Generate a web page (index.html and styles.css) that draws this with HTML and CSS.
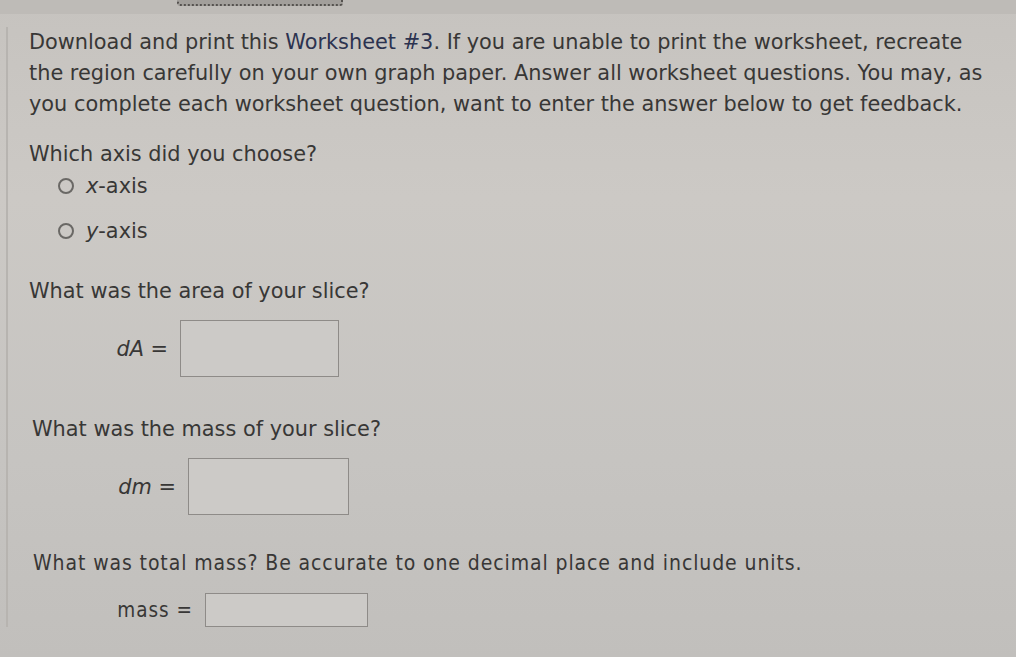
FILE: index.html
```html
<!DOCTYPE html>
<html>
<head>
<meta charset="utf-8">
<link rel="stylesheet" href="styles.css">
</head>
<body>
<div class="topbar"><div class="dotted"></div></div>
<div class="page">
  <p class="intro">Download and print this <span class="link">Worksheet #3</span>. If you are unable to print the worksheet, recreate the region carefully on your own graph paper. Answer all worksheet questions. You may, as you complete each worksheet question, want to enter the answer below to get feedback.</p>

  <p class="q q-axis">Which axis did you choose?</p>
  <div class="options">
    <label class="opt"><span class="radio"></span><span><i>x</i>-axis</span></label>
    <label class="opt"><span class="radio"></span><span><i>y</i>-axis</span></label>
  </div>

  <p class="q q-area">What was the area of your slice?</p>
  <div class="answer a-area"><span class="lbl"><i>dA</i> =</span><span class="box box-big"></span></div>

  <p class="q q-mass">What was the mass of your slice?</p>
  <div class="answer a-mass"><span class="lbl"><i>dm</i> =</span><span class="box box-big box-dm"></span></div>

  <p class="q q-total">What was total mass? Be accurate to one decimal place and include units.</p>
  <div class="answer a-total"><span class="lbl">mass =</span><span class="box box-small"></span></div>
</div>
</body>
</html>
```
FILE: styles.css
```css
html, body {
  margin: 0;
  padding: 0;
}
body {
  width: 1016px;
  height: 657px;
  overflow: hidden;
  background: linear-gradient(180deg, #c6c3bf 0%, #ccc9c5 30%, #c6c4c1 70%, #c1bfbc 100%);
  font-family: "DejaVu Sans", Verdana, sans-serif;
  color: #383736;
}
.topbar {
  height: 14px;
  background: #bebbb7;
  position: relative;
}
.dotted {
  position: absolute;
  left: 177px;
  top: -4px;
  width: 162px;
  height: 8px;
  border: 2px dotted #55524f;
  border-top: none;
  border-radius: 0 0 3px 3px;
  background: #a29f9b;
}
.page {
  margin-left: 6px;
  border-left: 2px solid #b7b4b0;
  padding-left: 21px;
  font-size: 20.85px;
}
.intro {
  margin: 13px 0 0 0;
  line-height: 31px;
  width: 962px;
}
.link {
  color: #2c3350;
}
.q {
  margin: 0;
  line-height: 24px;
}
.q-axis { margin-top: 22px; }
.options {
  display: flex;
  flex-direction: column;
  gap: 21px;
  margin-top: 8px;
  padding-left: 29px;
}
.opt {
  display: flex;
  align-items: center;
  gap: 12px;
  line-height: 24px;
}
.radio {
  width: 16px;
  height: 16px;
  border: 2px solid #6a6865;
  border-radius: 50%;
  box-sizing: border-box;
}
.q-area { margin-top: 36px; }
.answer {
  display: flex;
  align-items: center;
}
.lbl {
  display: inline-block;
  text-align: right;
  padding-right: 12px;
  box-sizing: border-box;
}
.box {
  display: inline-block;
  border: 1px solid #8e8b88;
  background: #cccac7;
  box-sizing: border-box;
}
.a-area { margin-top: 17px; }
.a-area .lbl { width: 151px; }
.box-big { width: 159px; height: 57px; }
.q-mass { margin-top: 40px; padding-left: 3px; }
.a-mass { margin-top: 17px; }
.a-mass .lbl { width: 159px; }
.box-dm { width: 161px; }
.q-total {
  margin-top: 36px;
  padding-left: 4px;
  font-family: "DejaVu Sans Condensed", "DejaVu Sans", sans-serif;
  font-stretch: condensed;
  font-size: 21px;
  letter-spacing: 0.9px;
}
.a-total { margin-top: 18px; }
.a-total .lbl {
  width: 176px;
  font-family: "DejaVu Sans Condensed", "DejaVu Sans", sans-serif;
  font-stretch: condensed;
  font-size: 20.5px;
  letter-spacing: 1px;
}
.box-small { width: 163px; height: 34px; }
```
